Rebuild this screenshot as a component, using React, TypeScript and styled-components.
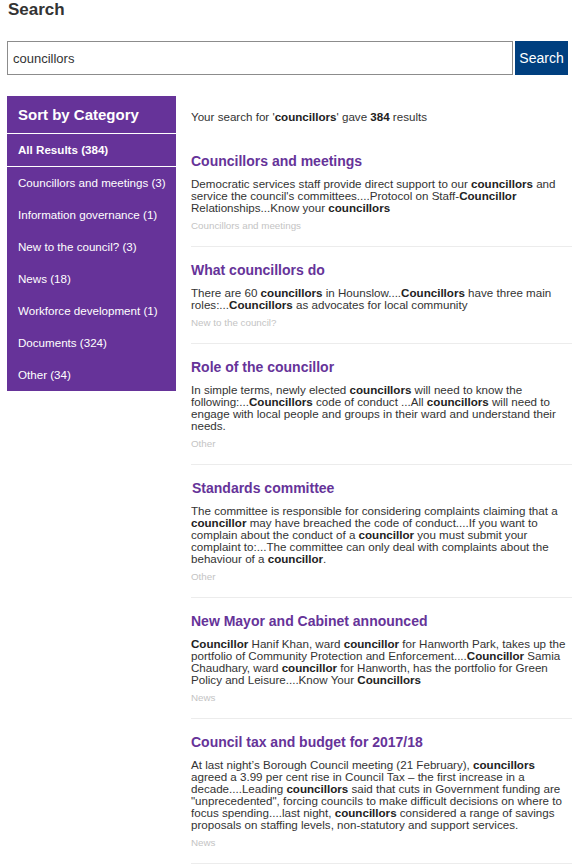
import React from "react";
import styled, { createGlobalStyle } from "styled-components";

const GlobalStyle = createGlobalStyle`
  html, body {
    margin: 0;
    padding: 0;
    background: #ffffff;
    font-family: "Liberation Sans", Arial, sans-serif;
    color: #333333;
  }
  * { box-sizing: border-box; }
`;

const Page = styled.div`
  width: 572px;
  padding: 0 0 0 7px;
`;

const PageTitle = styled.h1`
  margin: 0;
  padding-left: 1px;
  font-size: 17px;
  line-height: 20px;
  font-weight: bold;
  color: #333333;
`;

const SearchForm = styled.form`
  display: flex;
  gap: 2px;
  margin: 21px 4px 0 0;
  height: 34px;
`;

const SearchInput = styled.input`
  flex: 1;
  height: 34px;
  border: 1px solid #8c8c8c;
  padding: 0 0 0 5px;
  font-family: "Liberation Sans", Arial, sans-serif;
  font-size: 13px;
  color: #333333;
  outline: none;
  border-radius: 0;
`;

const SearchButton = styled.button`
  width: 53px;
  height: 34px;
  border: none;
  border-radius: 0;
  background: #003f7f;
  color: #ffffff;
  font-family: "Liberation Sans", Arial, sans-serif;
  font-size: 14px;
  padding: 0;
`;

const Columns = styled.div`
  display: flex;
  align-items: flex-start;
  gap: 15px;
  margin-top: 21px;
`;

const Sidebar = styled.nav`
  width: 169px;
  flex: none;
  background: #663399;
  color: #ffffff;
`;

const SidebarHeader = styled.h2`
  margin: 0;
  padding: 10px 11px;
  font-size: 15px;
  line-height: 17px;
  font-weight: bold;
  border-bottom: 1px solid #ffffff;
`;

const CategoryItem = styled.div<{ $active?: boolean }>`
  height: ${(p) => (p.$active ? "33px" : "32px")};
  line-height: 32px;
  padding: 0 11px;
  font-size: 11.6px;
  font-weight: ${(p) => (p.$active ? "bold" : "normal")};
  border-bottom: ${(p) => (p.$active ? "1px solid #ffffff" : "none")};
  white-space: nowrap;
`;

const Main = styled.main`
  flex: 1;
  min-width: 0;
`;

const Summary = styled.p`
  margin: 14px 0 0;
  font-size: 11.6px;
  line-height: 14px;
  color: #333333;
  b { color: #222222; }
`;

const ResultList = styled.div`
  margin-top: 14px;
`;

const ResultItem = styled.article`
  padding: 15px 0 14px;
  border-bottom: 1px solid #ececec;
`;

const ResultTitle = styled.h3<{ $indent?: number }>`
  margin: 0 0 9px;
  padding-left: ${(p) => p.$indent ?? 0}px;
  font-size: 14px;
  line-height: 16px;
  font-weight: bold;
  color: #663399;
`;

const ResultBody = styled.p`
  margin: 0 0 6px;
  font-size: 11.6px;
  line-height: 12px;
  color: #333333;
  b { color: #222222; }
`;

const ResultCategory = styled.div`
  font-size: 9.8px;
  line-height: 12px;
  color: #c4c4c4;
`;

const categories = [
  "Councillors and meetings (3)",
  "Information governance (1)",
  "New to the council? (3)",
  "News (18)",
  "Workforce development (1)",
  "Documents (324)",
  "Other (34)",
];

const results: { title: string; body: string; category: string; indent?: number }[] = [
  {
    title: "Councillors and meetings",
    body: "Democratic services staff provide direct support to our **councillors** and service the council's committees....Protocol on Staff-**Councillor** Relationships...Know your **councillors**",
    category: "Councillors and meetings",
  },
  {
    title: "What councillors do",
    body: "There are 60 **councillors** in Hounslow....**Councillors** have three main roles:...**Councillors** as advocates for local community",
    category: "New to the council?",
  },
  {
    title: "Role of the councillor",
    body: "In simple terms, newly elected **councillors** will need to know the following:...**Councillors** code of conduct ...All **councillors** will need to engage with local people and groups in their ward and understand their needs.",
    category: "Other",
  },
  {
    title: "Standards committee",
    body: "The committee is responsible for considering complaints claiming that a **councillor** may have breached the code of conduct....If you want to complain about the conduct of a **councillor** you must submit your complaint to:...The committee can only deal with complaints about the behaviour of a **councillor**.",
    category: "Other",
    indent: 1,
  },
  {
    title: "New Mayor and Cabinet announced",
    body: "**Councillor** Hanif Khan, ward **councillor** for Hanworth Park, takes up the portfolio of Community Protection and Enforcement....**Councillor** Samia Chaudhary, ward **councillor** for Hanworth, has the portfolio for Green Policy and Leisure....Know Your **Councillors**",
    category: "News",
  },
  {
    title: "Council tax and budget for 2017/18",
    body: "At last night\u2019s Borough Council meeting (21 February), **councillors** agreed a 3.99 per cent rise in Council Tax \u2013 the first increase in a decade....Leading **councillors** said that cuts in Government funding are \"unprecedented\", forcing councils to make difficult decisions on where to focus spending....last night, **councillors** considered a range of savings proposals on staffing levels, non-statutory and support services.",
    category: "News",
  },
];

function renderMarked(text: string) {
  return text.split("**").map((part, i) =>
    i % 2 === 1 ? <b key={i}>{part}</b> : <React.Fragment key={i}>{part}</React.Fragment>
  );
}

export default function App() {
  return (
    <>
      <GlobalStyle />
      <Page>
        <PageTitle>Search</PageTitle>
        <SearchForm onSubmit={(e) => e.preventDefault()}>
          <SearchInput defaultValue="councillors" />
          <SearchButton type="submit">Search</SearchButton>
        </SearchForm>
        <Columns>
          <Sidebar>
            <SidebarHeader>Sort by Category</SidebarHeader>
            <CategoryItem $active>All Results (384)</CategoryItem>
            {categories.map((c) => (
              <CategoryItem key={c}>{c}</CategoryItem>
            ))}
          </Sidebar>
          <Main>
            <Summary>
              Your search for '<b>councillors</b>' gave <b>384</b> results
            </Summary>
            <ResultList>
              {results.map((r) => (
                <ResultItem key={r.title}>
                  <ResultTitle $indent={r.indent}>{r.title}</ResultTitle>
                  <ResultBody>{renderMarked(r.body)}</ResultBody>
                  <ResultCategory>{r.category}</ResultCategory>
                </ResultItem>
              ))}
            </ResultList>
          </Main>
        </Columns>
      </Page>
    </>
  );
}
